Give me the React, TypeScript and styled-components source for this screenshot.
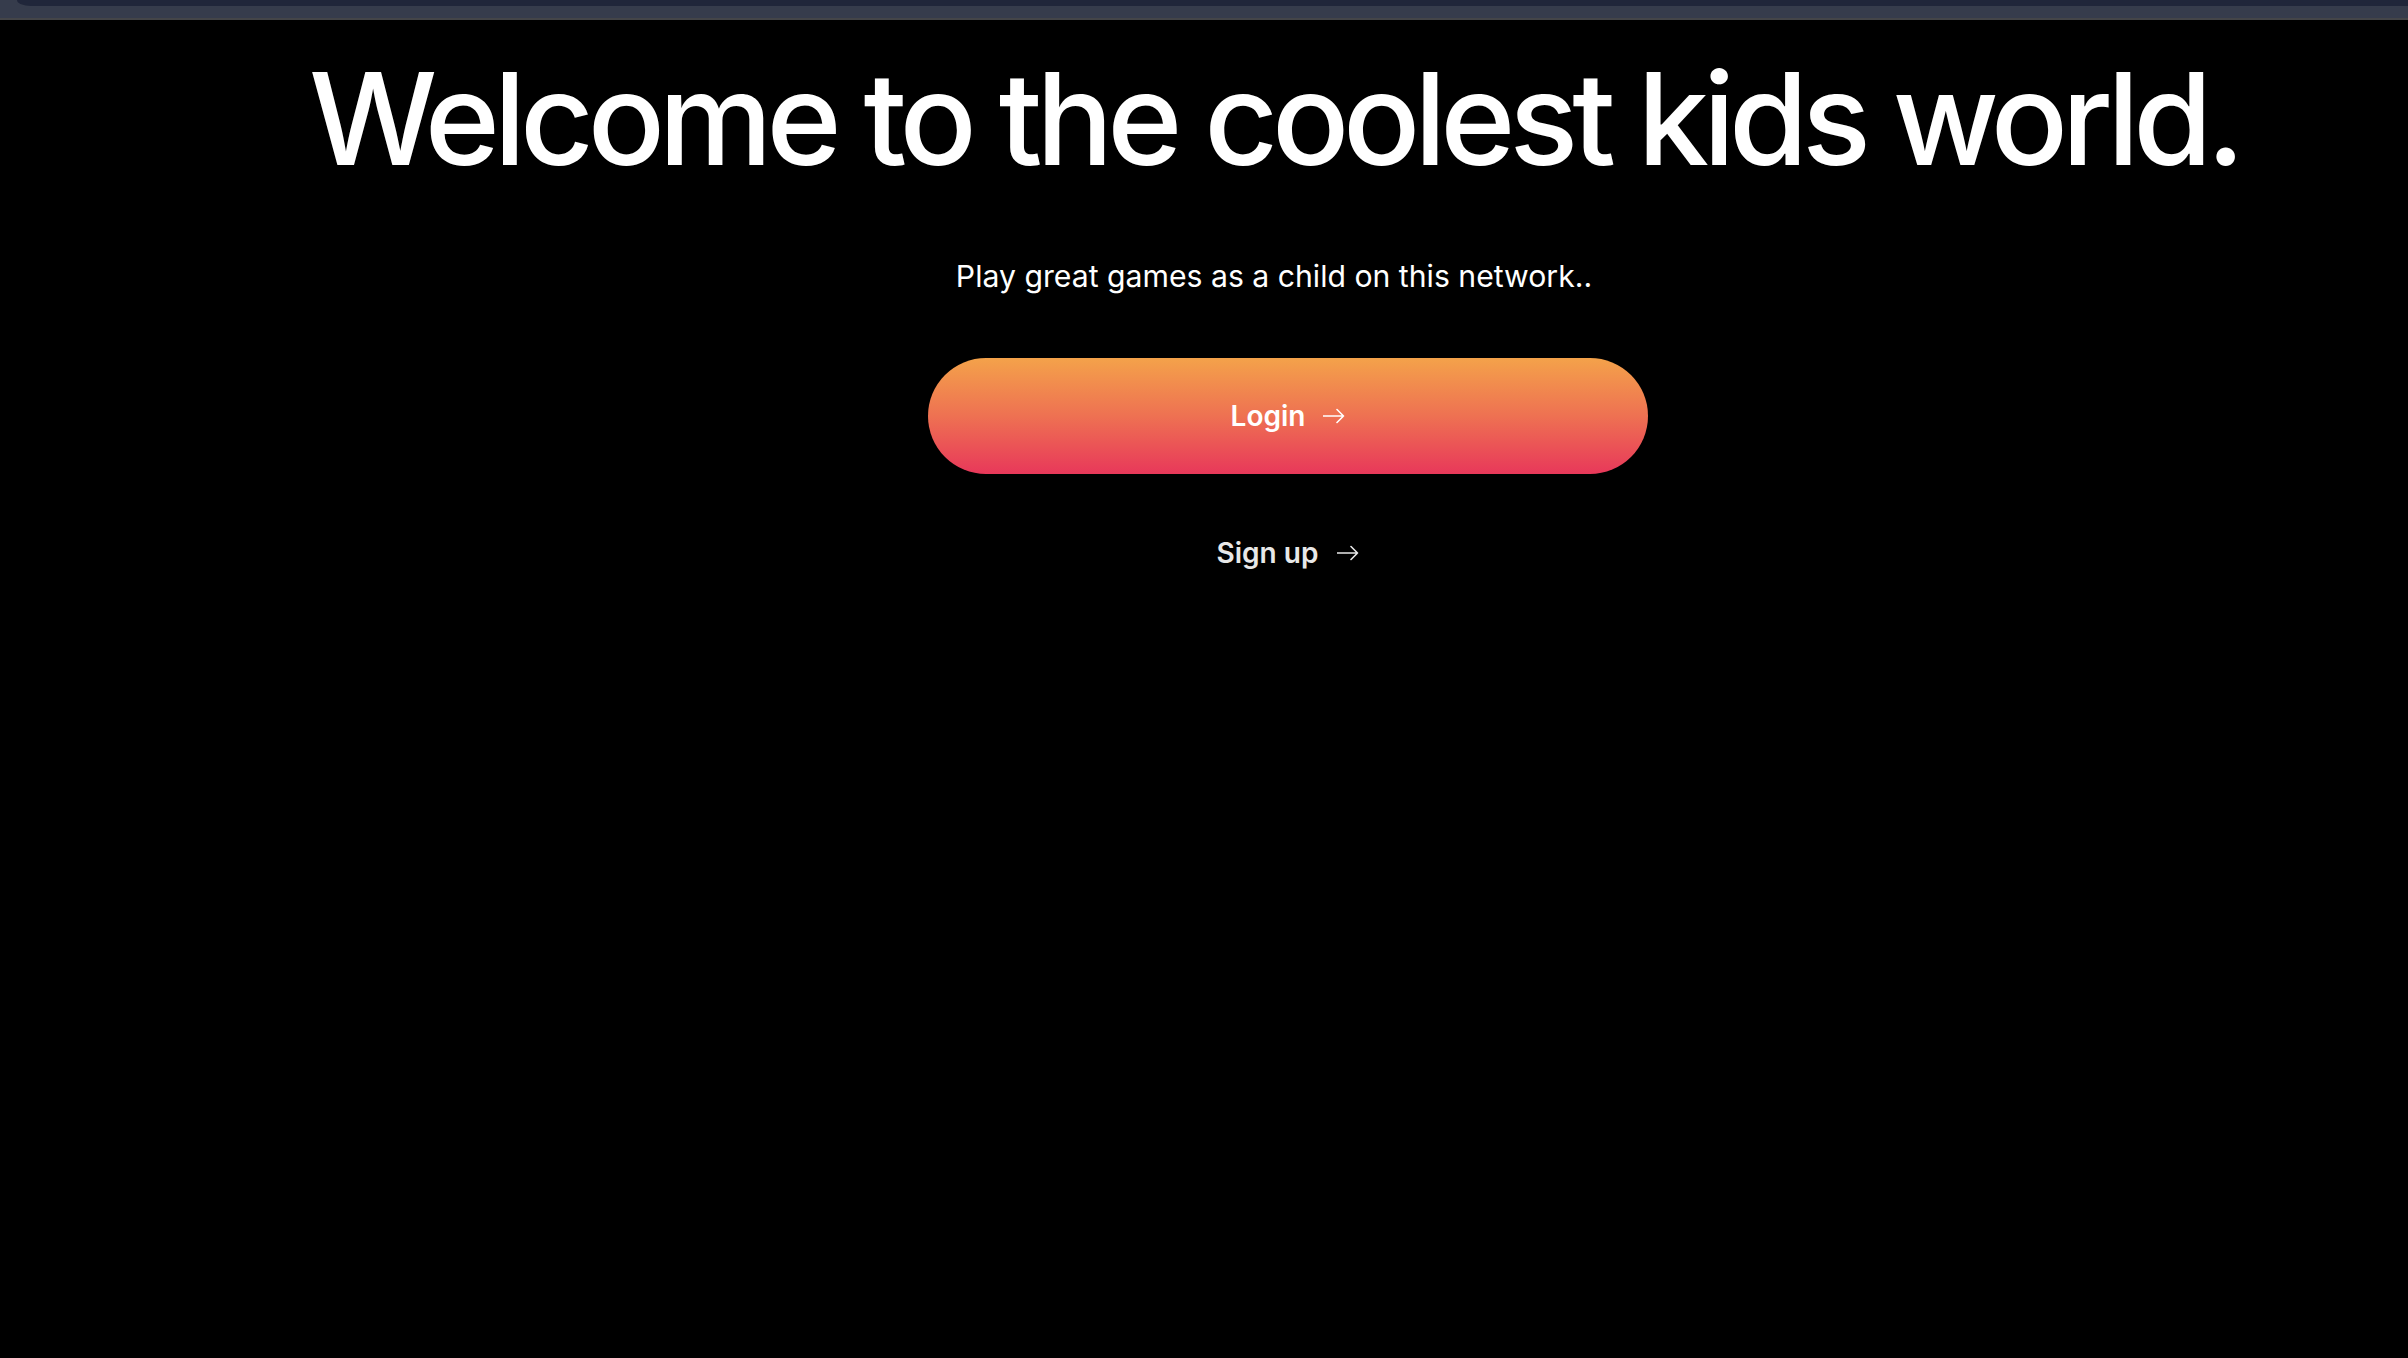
import React from "react";
import styled, { createGlobalStyle } from "styled-components";

const GlobalStyle = createGlobalStyle`
  html, body {
    margin: 0;
    padding: 0;
    background: #000;
  }
  body {
    font-family: Inter, "Liberation Sans", Arial, sans-serif;
    color: #fff;
  }
  * { box-sizing: border-box; }
`;

const Page = styled.div`
  min-height: 100vh;
  display: flex;
  flex-direction: column;
  background: #000;
`;

const TopBar = styled.div`
  height: 20px;
  background: #363c4c;
  border-bottom: 2px solid #444548;
  flex-shrink: 0;
`;

const DarkBand = styled.div`
  height: 6px;
  margin-left: 17px;
  background: #20263a;
  border-bottom-left-radius: 14px 6px;
`;

const Main = styled.main`
  display: flex;
  flex-direction: column;
  align-items: center;
  padding-left: 140px;
  padding-top: 35px;
`;

const Heading = styled.h1`
  margin: 0;
  font-family: Inter, "Liberation Sans", Arial, sans-serif;
  font-size: 128px;
  line-height: 1;
  font-weight: 500;
  letter-spacing: -0.048em;
  white-space: nowrap;
  color: #fff;
`;

const Subtitle = styled.p`
  margin: 75px 0 0;
  font-size: 30.2px;
  line-height: 36px;
  font-weight: 400;
  color: #fff;
`;

const Actions = styled.div`
  display: flex;
  flex-direction: column;
  align-items: center;
  margin-top: 64px;
  padding-left: 28px;
`;

const LoginButton = styled.button`
  width: 720px;
  height: 116px;
  border: none;
  border-radius: 58px;
  background: linear-gradient(180deg, #f4a24a 0%, #ee7152 50%, #e8385a 100%);
  display: flex;
  align-items: center;
  justify-content: center;
  gap: 18px;
  cursor: pointer;
  padding: 0;
`;

const LinkButton = styled.button`
  margin-top: 62px;
  background: none;
  border: none;
  padding: 0;
  display: flex;
  align-items: center;
  gap: 19px;
  cursor: pointer;
`;

const Label = styled.span<{ $muted?: boolean }>`
  font-family: Inter, "Liberation Sans", Arial, sans-serif;
  font-size: 28px;
  line-height: 34px;
  font-weight: 600;
  color: ${(p) => (p.$muted ? "#e8e8e8" : "#ffffff")};
`;

const Arrow = ({ color }: { color: string }) => (
  <svg width="22" height="16" viewBox="0 0 22 16" fill="none">
    <path
      d="M0.5 8H20.5M14 1.5L20.5 8L14 14.5"
      stroke={color}
      strokeWidth="1.6"
      strokeLinecap="round"
      strokeLinejoin="round"
    />
  </svg>
);

export default function App() {
  return (
    <>
      <GlobalStyle />
      <Page>
        <TopBar>
          <DarkBand />
        </TopBar>
        <Main>
          <Heading>Welcome to the coolest kids world.</Heading>
          <Subtitle>Play great games as a child on this network..</Subtitle>
          <Actions>
            <LoginButton>
              <Label>Login</Label>
              <Arrow color="#ffffff" />
            </LoginButton>
            <LinkButton>
              <Label $muted>Sign up</Label>
              <Arrow color="#e8e8e8" />
            </LinkButton>
          </Actions>
        </Main>
      </Page>
    </>
  );
}
